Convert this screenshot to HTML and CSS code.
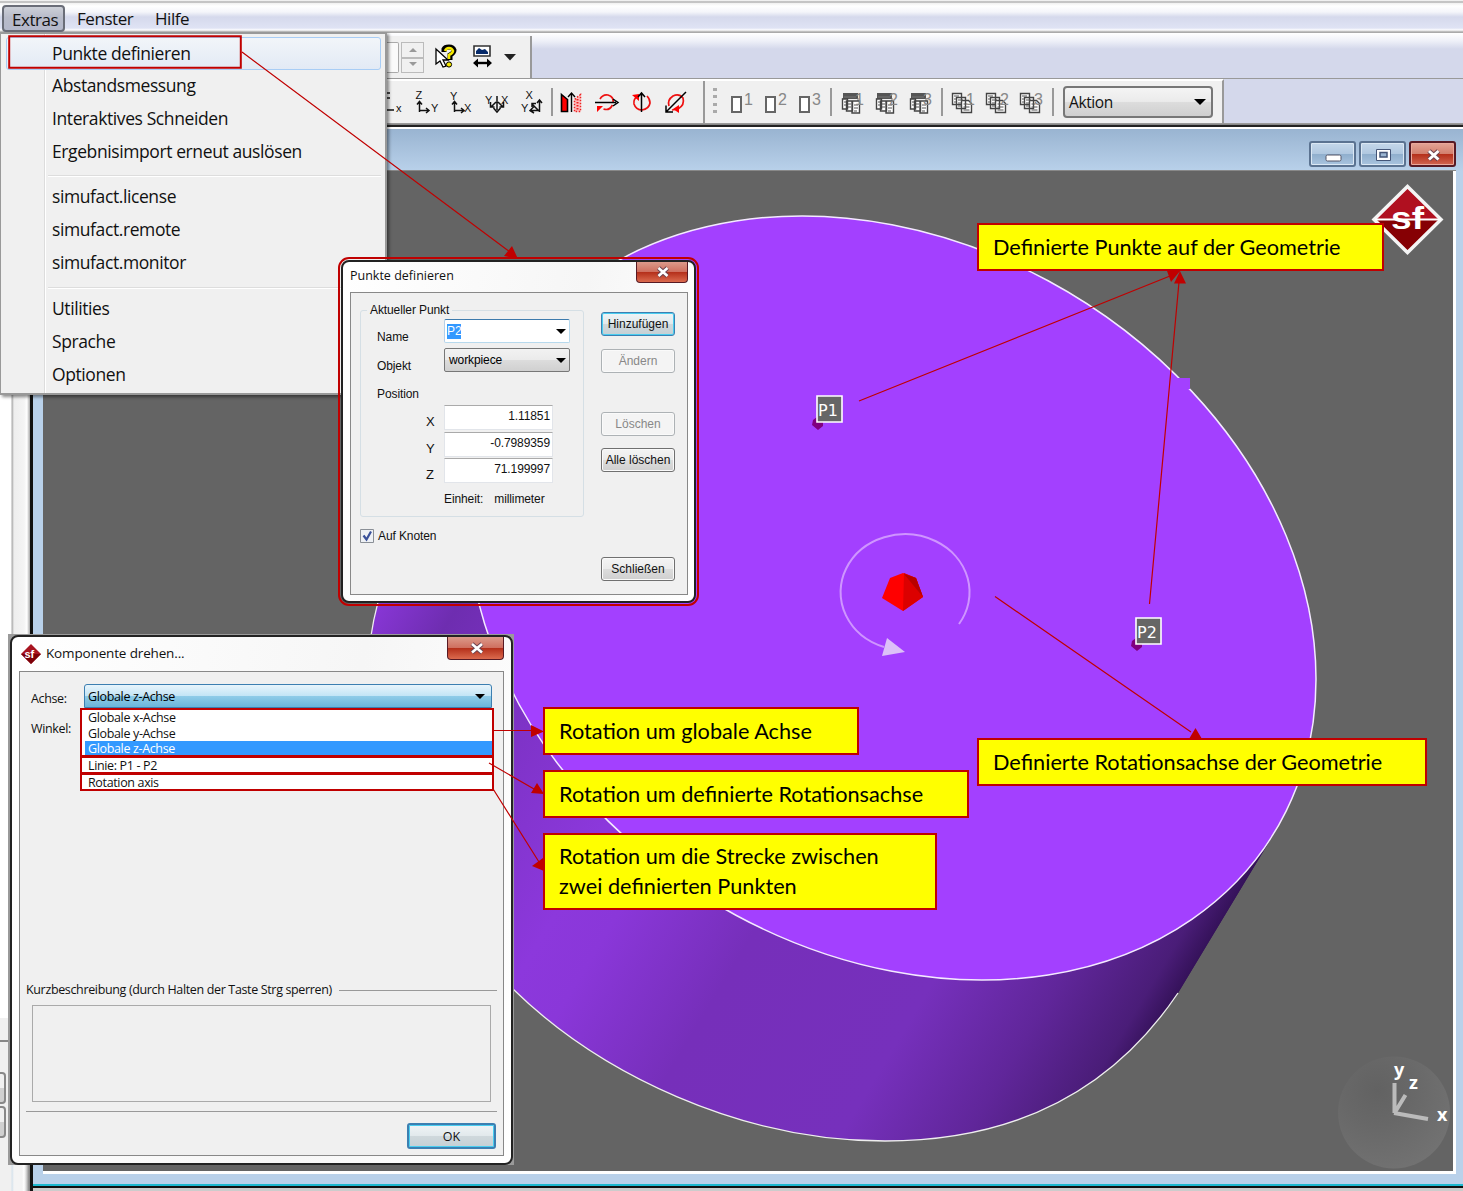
FILE: index.html
```html
<!DOCTYPE html>
<html lang="de">
<head>
<meta charset="utf-8">
<title>simufact</title>
<link rel="stylesheet" href="styles.css">
</head>
<body>
<div class="app">
  <nav class="menubar"><span class="menu-open">Extras</span><span class="m-fenster">Fenster</span><span class="m-hilfe">Hilfe</span></nav>
  <div class="bar bar1">
    <div class="bar-body">
      <div class="field-end"></div>
      <div class="spin"><i class="tri up"></i><i class="tri down"></i></div>
      <svg class="ico-help" width="26" height="30" viewBox="434 42 26 30">
        <path d="M436 49v15l4-3 3 6 3-1-3-6h5z" fill="#fff" stroke="#000" stroke-width="1.3"/>
        <path d="M444 52v-3q1-2 5-2t5 3q0 3-4 5v5" fill="none" stroke="#000" stroke-width="5"/>
        <path d="M445 51q1-3 4-3t4 3q0 2-4 4v4" fill="none" stroke="#f5e800" stroke-width="2.6"/>
        <circle cx="449" cy="64.5" r="2.6" fill="#f5e800" stroke="#000"/>
      </svg>
      <svg class="ico-mon" width="24" height="30" viewBox="471 42 24 30">
        <path d="M474 46h16v10h-16z" fill="#fff" stroke="#333" stroke-width="1.6"/>
        <path d="M476 54v-3l3-3 3 2 3-1 3 3v2z" fill="#062a6a"/>
        <path d="M477 63h10" stroke="#000" stroke-width="2.4"/><path d="M473 63l5-4.500v9zM492 63l-5-4.500v9z"/>
      </svg>
      <svg width="14" height="30" viewBox="503 42 14 30"><path d="M504 54h12l-6 6.500z" fill="#222"/></svg>
    </div>
  </div>
  <div class="bar bar2">
    <div class="bar-body">
      <svg width="164" height="32" viewBox="387 86 164 32" class="axes">
        <g fill="none" stroke="#111" stroke-width="1.5">
          <path d="M386 93h4M386 98h4M387 110h7M419.500 112v-9M417 104.500l2.500-3 2.500 3M419 110.500h9M426 108l3 2.500-3 2.500M454.500 112v-9M452 104.500l2.500-3 2.500 3M454 110.500h9M461 108l3 2.500-3 2.500"/>
          <path d="M497 96v14M493.500 108l3.500 4 3.500-4M490.500 102v5h4M491 107l5-5M503.500 102v5h-4M503 107l-5-5M539.500 112v-10M537 103l2.500-3 2.500 3M539 110.500h-8M534 106.500l-4 4 4 2.500M539 111l-7-7M532 107v-3.500h4"/>
        </g>
        <g class="axl"><text x="396" y="112">x</text><text x="415.500" y="99">Z</text><text x="431" y="112">Y</text><text x="450" y="100">Y</text><text x="464" y="112">X</text><text x="485" y="104">Y</text><text x="501" y="104">X</text><text x="525.500" y="99">X</text><text x="521" y="112">Y</text></g>
      </svg>
      <i class="sep"></i>
      <svg width="150" height="32" viewBox="555 86 150 32" fill="none">
        <path d="M563.500 94.500l6 5v12h-6z" fill="#f00" stroke="#000" stroke-width="1.600"/>
        <path d="M573.500 112V94M570 97l3.500-4 3.500 4" stroke="#000" stroke-width="1.400"/>
        <path d="M582.500 94.500l-6 5v12h6z" fill="#fbb" stroke="#e22" stroke-width="1.500" stroke-dasharray="1.500 1.500"/><path d="M579.500 99v12" stroke="#e22" stroke-width="2" stroke-dasharray="1.500 1.500"/>
        <g stroke="#e11" stroke-width="1.700"><path d="M602 99q3-5 8-4 6 2 5 7M614.500 105q-3 6-9 4"/><path d="M640 96q-5 3-4 8 2 6 8 6 7-1 8-7 0-4-3-7"/><path d="M671 106q-2-6 4-10 6-3 10 2 2 7-5 11l-6 1"/></g>
        <path d="M599 112v-6h6zM634 95l7-1v7zM681 105v8l-6-4z" fill="#f00"/>
        <path d="M597 102.500h21M615 99l5 3.500-5 3.500M643.500 112V94M640 97l3.500-4 3.500 4M688 92l-20 20M668 105.500v6.500h7" stroke="#000" stroke-width="1.500"/>
      </svg>
      <i class="sep tall"></i>
      <i class="grip"></i>
      <svg class="nums" width="108" height="32" viewBox="724 86 108 32">
        <g fill="#fff" stroke="#666" stroke-width="2"><path d="M734 97h9v15h-9zM768 97h9v15h-9zM802 97h9v15h-9z"/></g>
        <text x="746" y="105">1</text><text x="780" y="105">2</text><text x="814" y="105">3</text>
      </svg>
      <i class="sep"></i>
      <svg class="nums" width="109" height="32" viewBox="834 86 109 32">
        <defs>
          <g id="tab"><path d="M2 7h15v6h-15z" fill="#555"/><path d="M2 12v8h8M3 11h12M17 12v3" fill="none" stroke="#777"/><path d="M1.500 13h5v10h-5zM5.500 15h6v10h-6zM11 15h7.500v12h-7.500z" fill="#fff" stroke="#444" stroke-width="1.400"/><path d="M13 19h4M13 22h4M13 25h3M7 18h3M7 21h3M3 16h2M3 19h2" stroke="#555"/></g>
          <g id="pages"><path d="M1.500 7.500h9v11h-9zM5.500 11.500h9v11h-9zM10.500 14.500h7l3 3v9h-10z" fill="#fff" stroke="#444" stroke-width="1.400"/><path d="M3 10h5M3 13h2M3 16h2M7 14h5M7 17h3M7 20h3M12.500 18h4M12.500 21h6M12.500 24h6" stroke="#555"/></g>
        </defs>
        <use href="#tab" x="843" y="86"/><use href="#tab" x="877" y="86"/><use href="#tab" x="911" y="86"/>
        <text x="857" y="105">1</text><text x="891" y="105">2</text><text x="925" y="105">3</text>
      </svg>
      <i class="sep"></i>
      <svg class="nums" width="109" height="32" viewBox="945 86 109 32">
        <use href="#pages" x="953" y="86"/><use href="#pages" x="987" y="86"/><use href="#pages" x="1021" y="86"/>
        <text x="968" y="105">1</text><text x="1002" y="105">2</text><text x="1036" y="105">3</text>
      </svg>
      <i class="sep"></i>
      <div class="aktion"><span>Aktion</span><i class="tri down big"></i></div>
    </div>
  </div>
  <div class="workspace">
    <div class="side"><div class="side-low"><i></i><b></b><b></b></div></div>
    <div class="mdi">
      <div class="mdi-title">
        <span class="wb"><svg width="44" height="24"><rect x="15" y="12" width="15" height="6" rx="1.500" fill="#fff" stroke="#556"/></svg></span>
        <span class="wb"><svg width="44" height="24"><path d="M15.500 6.500h14v11h-14z" fill="#fff" stroke="#445577"/><path d="M19 9.500h7v4.500h-7z" fill="#9bb6d2" stroke="#445577" stroke-width="1.500"/></svg></span>
        <span class="wb red"><svg width="44" height="24"><path d="M18 8l9.500 8.500M27.500 8l-9.500 8.500" stroke="#6b4350" stroke-width="5"/><path d="M18 8l9.500 8.500M27.500 8l-9.500 8.500" stroke="#fff" stroke-width="3"/></svg></span>
      </div>
      <div class="viewport">
        <svg width="1411" height="1001" viewBox="43 172 1411 1001">
          <defs>
            <linearGradient id="side" gradientUnits="userSpaceOnUse" x1="509" y1="365" x2="1278" y2="828">
              <stop offset="0" stop-color="#8c38dc"/><stop offset=".09" stop-color="#6e2db0"/><stop offset=".2" stop-color="#7c32c4"/><stop offset=".36" stop-color="#8c38dc"/><stop offset=".42" stop-color="#8a37d9"/><stop offset=".56" stop-color="#762fba"/><stop offset=".76" stop-color="#7630bc"/><stop offset=".88" stop-color="#60269a"/><stop offset=".97" stop-color="#4a1d78"/><stop offset="1" stop-color="#35125a"/>
            </linearGradient>
            <radialGradient id="ball" cx=".35" cy=".3" r=".8"><stop offset="0" stop-color="#626262"/><stop offset=".4" stop-color="#686868"/><stop offset="1" stop-color="#737373"/></radialGradient>
          </defs>
          <g fill="url(#side)">
            <path d="M509 365L412 526L1178 994L1275 833z"/>
            <path d="M371 679A424 424 0 0 0 371 679"/>
          </g>
          <path d="M412 526C360 610 358 700 385 785C410 870 455 940 513 990C600 1075 740 1142 885 1142C1010 1142 1110 1095 1178 994L1275 833L509 365z" fill="url(#side)"/>
          <path d="M412 526C360 610 358 700 385 785C410 870 455 940 513 990C600 1075 740 1142 885 1142C1010 1142 1110 1095 1178 994" fill="none" stroke="#eee" stroke-width="1.300"/>
          <circle r="1" transform="matrix(424 81.100 0 373.300 892 599)" fill="#a340ff" stroke="#f4eaff" stroke-width="1.500" vector-effect="non-scaling-stroke"/>
          <path d="M1177 379h13v11h-13z" fill="#a340ff"/>
          <g fill="none" stroke="#cf95ff" stroke-width="2"><path d="M959 625A64.500 58 0 1 0 884 648"/></g>
          <path d="M887 639l18 14-23 4z" fill="#dcc0f8"/>
          <path d="M903 574l13 5 7 19-20 14-21-13 8-20z" fill="#f00"/><path d="M904 574l12 5 7 19-20 14z" fill="#dc0000"/><path d="M904 575l12 4 7 19z" fill="#b80000"/>
          <path d="M813 421l4-3 6 3v6l-5 4-6-5zM1132 642l4-3 6 3v6l-5 4-6-5z" fill="#800080"/>
          <g fill="#666" stroke="#fff" stroke-width="1.600"><path d="M817 397h25v26h-25zM1136 619h25v26h-25z"/></g>
          <g class="pt"><text x="818" y="416.500">P1</text><text x="1137" y="638.500">P2</text></g>
          <circle cx="1394" cy="1113.500" r="56" fill="url(#ball)"/>
          <g stroke="#bbb" stroke-width="4" fill="none"><path d="M1394.500 1084v30M1394.500 1114l11-18M1394 1114l34 6"/></g>
          <g class="xyz"><text x="1394" y="1077">y</text><text x="1409" y="1090">z</text><text x="1437" y="1122">x</text></g>
          <g id="logo"><path d="M1407.500 187.500l33 33-33 33-33-33z" fill="#b01020"/><path d="M1374.500 220.500h66l-33 33z" fill="#860004"/><path d="M1407.500 187.500l33.500 33-33.500 33-33.500-33z" fill="none" stroke="#f4f4f4" stroke-width="3.500"/><path d="M1375 220.500h66" stroke="#fff" stroke-width="2"/><text x="1391" y="230" font-family="Liberation Sans" font-weight="bold" font-size="31" fill="#fff" textLength="33" lengthAdjust="spacingAndGlyphs">sf</text></g>
        </svg>
      </div>
    </div>
  </div>
</div>

<div class="dropdown">
  <div class="hot">Punkte definieren</div>
  <div>Abstandsmessung</div>
  <div>Interaktives Schneiden</div>
  <div>Ergebnisimport erneut auslösen</div>
  <hr>
  <div>simufact.license</div>
  <div>simufact.remote</div>
  <div>simufact.monitor</div>
  <hr>
  <div>Utilities</div>
  <div>Sprache</div>
  <div>Optionen</div>
</div>

<section class="dlg points">
  <header><span>Punkte definieren</span><b class="close"><svg width="50" height="20"><path d="M21.500 6l9 8M30.500 6l-9 8" stroke="#6b4350" stroke-width="4.500"/><path d="M21.500 6l9 8M30.500 6l-9 8" stroke="#fff" stroke-width="2.600"/></svg></b></header>
  <div class="pane">
    <div class="col-l">
      <fieldset>
        <legend>Aktueller Punkt</legend>
        <div class="row r-name"><label>Name</label><div class="combo edit"><mark>P2</mark><i class="tri down"></i></div></div>
        <div class="row r-obj"><label>Objekt</label><div class="combo"><span>workpiece</span><i class="tri down"></i></div></div>
        <div class="row r-pos"><label>Position</label></div>
        <div class="row xyzrow"><label>X</label><output>1.11851</output></div>
        <div class="row xyzrow"><label>Y</label><output>-0.7989359</output></div>
        <div class="row xyzrow"><label>Z</label><output>71.199997</output></div>
        <div class="row unit"><span>Einheit:</span><span>millimeter</span></div>
      </fieldset>
      <div class="check"><svg width="14" height="14"><path d="M.5.5h13v13h-13z" fill="#eef1f5" stroke="#8a8f96"/><path d="M3.500 6.500l3 4 4.500-8" fill="none" stroke="#39509a" stroke-width="2.200"/></svg><span>Auf Knoten</span></div>
    </div>
    <div class="col-r">
      <button class="btn focus">Hinzufügen</button>
      <button class="btn off b2">Ändern</button>
      <button class="btn off b3">Löschen</button>
      <button class="btn b4"><span>Alle löschen</span></button>
      <button class="btn b5">Schließen</button>
    </div>
  </div>
</section>

<section class="dlg-wrap">
<div class="dlg rotate">
  <header><svg width="20" height="20" viewBox="0 0 20 20"><path d="M10 0l10 10-10 10L0 10z" fill="#a81420"/><path d="M0 10h20L10 20z" fill="#7c0008"/><text x="3.500" y="13.500" font-family="Liberation Sans" font-weight="bold" font-size="11" fill="#fff">sf</text></svg><span>Komponente drehen...</span><b class="close"><svg width="55" height="22"><path d="M24 7l10 8.500M34 7l-10 8.500" stroke="#6b4350" stroke-width="4.500"/><path d="M24 7l10 8.500M34 7l-10 8.500" stroke="#fff" stroke-width="2.600"/></svg></b></header>
  <div class="pane">
    <div class="form">
      <div class="labels"><span>Achse:</span><span>Winkel:</span></div>
      <div class="select">
        <div class="sel-head"><span>Globale z-Achse</span><i class="tri down"></i></div>
        <div class="grp g1"><div>Globale x-Achse</div><div>Globale y-Achse</div><div class="on">Globale z-Achse</div></div>
        <div class="grp g2"><div>Linie: P1 - P2</div></div>
        <div class="grp g3"><div>Rotation axis</div></div>
      </div>
    </div>
    <div class="kurz"><span>Kurzbeschreibung (durch Halten der Taste Strg sperren)</span><i></i></div>
    <div class="memo"></div>
    <div class="foot"><button class="btn focus">OK</button></div>
  </div>
</div>
</section>

<div class="note n1">Definierte Punkte auf der Geometrie</div>
<div class="note n2">Definierte Rotationsachse der Geometrie</div>
<div class="note n3">Rotation um globale Achse</div>
<div class="note n4">Rotation um definierte Rotationsachse</div>
<div class="note n5">Rotation um die Strecke zwischen<br>zwei definierten Punkten</div>

<svg class="arrows" width="1463" height="1191" viewBox="0 0 1463 1191">
  <path d="M9.200 36.200h231.600v31.600H9.200z" fill="none" stroke="#c00000" stroke-width="2"/>
  <path d="M242 52L510 252M859 401L1170 276M1149.500 604L1179 282M995 596.500L1191 732M493 730.500H532M489 763L534 789M492.500 788L539 862" fill="none" stroke="#c00000" stroke-width="1.200"/>
  <path d="M518 259l-14-3 8-10zM1180 271l-9 11-4-11zM1180 271l6 12.500h-12zM1202 739h-13l6.500-11zM544 731.500l-13 5.500v-12zM544 794l-13-1 6-10zM544 871l-12-5 11-8z" fill="#c00000"/>
</svg>
</body>
</html>
```
FILE: styles.css
```css
* { box-sizing: border-box; }
body { margin: 0; width: 1463px; height: 1191px; overflow: hidden; position: relative; font-family: "Open Sans", "Noto Sans", sans-serif; color: #111; background: #f0f0f0; }
i { display: block; }
svg { display: block; flex: none; }
.app { height: 1191px; display: flex; flex-direction: column; }
.menubar { height: 33px; flex: none; display: flex; align-items: center; padding: 4px 0 0 2px; font-size: 17px; letter-spacing: -.45px; background: linear-gradient(#f0f0f0 0 1px, #999 2px, #f0f0f0 3px, #fff 6px, #f4f5fa 12px, #d5d9ec 17px, #dfe3f4 28px, #fdfdff 30px, #aaa 32px); }
.menu-open { height: 27px; width: 63px; line-height: 25px; padding-left: 8px; border: 2px solid #6a6d78; border-radius: 4px; background: linear-gradient(#cdd0d8, #b8bbc9 45%, #b4b8cb); white-space: nowrap; }
.m-fenster { margin-left: 12px; width: 78px; line-height: 25px; }
.m-hilfe { line-height: 25px; }
.bar { flex: none; display: flex; background: linear-gradient(#fff, #eef0f8 8px, #d4d8eb 16px); }
.bar-body { display: flex; align-items: center; background: #f0f0f0; border-right: 2px solid #999; }
.bar1 { height: 46px; padding-top: 3px; border-bottom: 1px solid #999; }
.bar1 .bar-body { width: 532px; padding-left: 386px; }
.field-end { width: 13px; height: 31px; border: 1px solid #aaa; border-left: 0; border-radius: 0 2px 2px 0; background: #fafafa; }
.spin { margin-left: 2px; width: 23px; height: 31px; border: 1px solid #bbb; display: flex; flex-direction: column; justify-content: space-around; align-items: center; background: linear-gradient(#f0f0f0 14px, #bbb 14px 16px, #f0f0f0 16px); }
.spin .tri { border-width: 4px; color: #999; }
.tri { width: 0; height: 0; border: 5px solid transparent; }
.tri.down { border-top-color: currentColor; border-bottom: 0; }
.tri.up { border-bottom-color: currentColor; border-top: 0; }
.ico-help { margin-left: 10px; }
.ico-mon { margin-left: 11px; }
.ico-mon + svg { margin-left: 8px; }
.bar2 { height: 44px; background: #d4d8eb; }
.bar2 .bar-body { width: 1224px; padding-left: 387px; border-top: 2px solid #fff; }
.sep { width: 2px; height: 28px; background: #999; flex: none; }
.sep.tall { height: 42px; }
.axl text { font: 11px "Liberation Sans", sans-serif; fill: #111; }
.nums text { font: 16px "Liberation Sans", sans-serif; fill: #888; }
.grip { width: 4px; height: 28px; margin: 0 5px 0 8px; background: repeating-linear-gradient(#aaa 0 3px, #f0f0f0 3px 7.500px); }
.aktion { margin-left: 9px; width: 150px; height: 32px; border: 2px solid #777; border-radius: 4px; display: flex; align-items: center; justify-content: space-between; padding: 0 5px 0 4px; font-size: 15.500px; letter-spacing: -.4px; background: linear-gradient(#f4f4f4, #ebebeb 48%, #dcdcdc 52%, #cfcfcf); }
.tri.big { border-width: 6px; color: #000; }
.workspace { flex: 1; display: flex; border-top: 1px solid #999; }
.side { width: 30px; flex: none; background: linear-gradient(90deg, #fff 0 11px, #aaa 12px, #eee 14px, #f4f4f4 24px, #fff 27px, #ddd 28px, #aaa 30px); display: flex; flex-direction: column; justify-content: flex-end; }
.side-low { height: 173px; background: linear-gradient(90deg, #f0f0f0 0 11px, #d5e2ec 12px, #f4f4f4 14px 22px, #fff 24px, #ddd 26px, #888 29px); padding-top: 22px; }
.side-low i { height: 2px; width: 8px; background: #888; margin-bottom: 30px; }
.side-low b { display: block; width: 6px; height: 32px; border: 2px solid #888; border-left: 0; border-radius: 0 4px 4px 0; margin-bottom: 2px; background: linear-gradient(#f0f0f0 50%, #d0d0d0 50%); }
.mdi { flex: 1; height: 1067px; display: flex; flex-direction: column; padding: 4px 9px 3px 10px; border-left: 3px solid #111; background: linear-gradient(#888 0 1px, #222 1px 3px, #fff 3px 5px, #99b4d1 5px, #b9d1ea 47px, #b9d1ea 1060px, #1cb8cf 1060px 1062px, #111 1062px 1064px, #ccc 1064px); }
.mdi-title { height: 43px; flex: none; display: flex; justify-content: flex-end; gap: 3px; padding-top: 13px; border-bottom: 1px solid #888; }
.wb { width: 47px; height: 26px; border: 2px solid #5b7391; border-radius: 3px; background: linear-gradient(#c5d8ea, #b0c8e0 48%, #90afcd 52%, #a9c4df); box-shadow: inset 0 0 0 1px #dbe8f4; }
.wb.red { border-color: #571a24; background: linear-gradient(#e3a596, #d3806e 48%, #b5301b 52%, #d16651); box-shadow: inset 0 0 0 1px #eaa89b; }
.viewport { width: 1413px; height: 1003px; background: #646464; border-right: 3px solid #fff; border-bottom: 3px solid #fff; overflow: hidden; }
.pt text { font: 16px "DejaVu Sans", sans-serif; fill: #fff; }
.xyz text { font: bold 18px "Noto Sans", sans-serif; fill: #fff; }

.dropdown { position: absolute; left: 0; top: 32px; width: 387px; height: 363px; padding: 4px 4px 0 5px; border: 2px solid #999; border-left-width: 1px; background: linear-gradient(90deg, #f0f0f0 43px, #dcdcdc 43px 44px, #fff 44px 45px, #f0f0f0 45px); font-size: 17.500px; letter-spacing: -.4px; box-shadow: 2px 2px 3px rgba(0,0,0,.45); }
.dropdown div { height: 33.100px; line-height: 30px; padding-left: 46px; white-space: nowrap; }
.dropdown .hot { height: 33px; margin-top: -1px; border: 1px solid #a8cdf5; border-radius: 3px; padding-left: 45px; background: linear-gradient(#f2f5f9, #e2eaf5); }
.dropdown hr { margin: 6px 0 4px 42px; border: 0; height: 2px; background: linear-gradient(#ddd 50%, #fff 50%); }

.dlg { display: flex; flex-direction: column; background: linear-gradient(100deg, #fff, #f6f6f6 60%, #fff); border: 2px solid #222; border-radius: 8px; }
.dlg header { display: flex; flex: none; white-space: nowrap; }
.close { margin-left: auto; border: 1px solid #571a24; border-top: 0; border-radius: 0 0 4px 4px; background: linear-gradient(#dc9a8b, #cf7060 48%, #b5301b 52%, #db6a4e); }
.pane { background: #f0f0f0; border: 1px solid #888; flex: 1; }
.btn { font: inherit; color: #111; padding: 0; border: 1px solid #707070; border-radius: 3px; display: block; white-space: nowrap; background: linear-gradient(#f4f4f4, #ebebeb 48%, #dcdcdc 52%, #cfcfcf); box-shadow: inset 0 0 0 1px #fafafa; }
.btn.focus { border: 1px solid #3c7fb1; box-shadow: inset 0 0 0 1px #49cdf0; background: linear-gradient(#eff4f6, #e2e9ec 48%, #cfd8dc 52%, #c5d0d5); }
.btn.off { border-color: #adb2b5; color: #888; background: #f4f4f4; }
.points { position: absolute; left: 341px; top: 260px; width: 355px; height: 343px; outline: 2px solid #c00000; outline-offset: 1px; padding: 0 6px 6px 7px; font: 12px "Liberation Sans", sans-serif; letter-spacing: -.1px; }
.points header { height: 30px; font: 12.500px "Open Sans", sans-serif; line-height: 28px; letter-spacing: 0; }
.points .close { height: 21px; width: 52px; }
.points .pane { display: flex; padding: 0 12px 0 9px; }
.col-l { width: 225px; }
.points fieldset { margin: 10px 0 0; padding: 0; height: 214px; border: 1px solid #d5dfe5; border-radius: 3px; }
.points legend { margin-left: 6px; padding: 0 3px; line-height: 14px; }
.row { display: flex; }
.row label { padding-left: 16px; width: 83px; flex: none; }
.combo { width: 126px; height: 24px; border: 1px solid #777; border-radius: 2px; display: flex; align-items: center; justify-content: space-between; padding: 0 3px 0 4px; color: #000; background: linear-gradient(#f2f2f2, #ebebeb 48%, #dcdcdc 52%, #d0d0d0); }
.combo.edit { background: #fff; border-color: #3d7bad #b7d9ed #b7d9ed #b5cfe7; padding-left: 2px; }
.combo mark { background: #3399ff; color: #fff; height: 15px; line-height: 15px; }
.r-name { margin-top: 2px; }
.r-name label, .r-obj label { padding-top: 11px; line-height: 14px; }
.r-obj { margin-top: 4px; height: 24px; }
.r-pos { margin-top: 13px; height: 18px; line-height: 18px; }
.xyzrow { height: 26.700px; }
.xyzrow:nth-of-type(4) { margin-top: 2px; }
.xyzrow label { padding: 9px 0 0 65px; font-size: 13px; line-height: 15px; }
.xyzrow output { width: 109px; height: 25px; border: 1px solid #e2e5ea; border-top-color: #aaa; background: #fff; text-align: right; padding: 3px 2px 0 0; line-height: 14px; }
.unit { padding: 7px 0 0 83px; gap: 11px; }
.check { display: flex; gap: 4px; margin-top: 12px; }
.col-r { margin-left: 17px; }
.col-r .btn { width: 74px; height: 24px; margin-top: 19px; }
.col-r .btn.b2 { margin-top: 13px; }
.col-r .btn.b3 { margin-top: 39px; }
.col-r .btn.b4 { margin-top: 12px; }
.col-r .btn.b5 { margin-top: 85px; }
.dlg-wrap { position: absolute; left: 8px; top: 634px; width: 506px; height: 531px; background: #9a9a9a; padding: 1px 1px 0 2px; }
.rotate { height: 530px; padding: 0 7px 7px 7px; font-size: 12.500px; letter-spacing: -.35px; }
.rotate header { height: 34px; font-size: 13.500px; line-height: 33px; letter-spacing: -.15px; }
.rotate header > svg { margin: 7px 5px 0 2px; }
.rotate .close { width: 57px; height: 23px; }
.rotate .pane { display: flex; flex-direction: column; }
.form { display: flex; height: 309px; padding-top: 12px; }
.labels { width: 60px; padding-left: 11px; display: flex; flex-direction: column; gap: 12px; line-height: 18px; padding-top: 6px; }
.select { width: 414px; }
.sel-head { margin: 0 2px 0 4px; width: 408px; height: 24px; border: 1px solid #3c7fb1; border-radius: 3px 3px 0 0; display: flex; align-items: center; justify-content: space-between; padding: 0 6px 0 3px; color: #000; background: linear-gradient(#e8f5fc, #c4e5f6 48%, #8fcbe8 52%, #6bb5da); }
.grp { border: 2px solid #c00000; background: #fff; line-height: 16px; height: 17px; overflow: hidden; }
.grp div { padding-left: 6px; height: 15.700px; }
.grp .on { background: #3399ff; color: #fff; margin: 0 0 0 3px; padding-left: 3px; }
.g1 { height: 49px; }
.g2, .g3 { border-top-width: 1px; }
.kurz { display: flex; align-items: center; padding: 0 6px; line-height: 18px; gap: 7px; white-space: nowrap; }
.kurz i { flex: 1; height: 1px; background: #999; }
.memo { margin: 6px 12px 0; height: 97px; border: 1px solid #aaa; }
.foot { margin: 9px 6px 0; border-top: 1px solid #999; padding: 11px 1px 0 0; display: flex; justify-content: flex-end; }
.foot .btn { width: 89px; height: 26px; border-width: 2px; }

.note { position: absolute; border: 2px solid #c00000; background: #ff0; color: #000; font: 21.700px/30px Lato, sans-serif; padding: 7px 14px; white-space: nowrap; height: 48px; }
.n1 { left: 977px; top: 223px; width: 407px; }
.n2 { left: 977px; top: 738px; width: 450px; }
.n3 { left: 543px; top: 707px; width: 316px; }
.n4 { left: 543px; top: 770px; width: 426px; }
.n5 { left: 543px; top: 833px; width: 394px; height: 77px; padding-top: 6px; }
.arrows { position: absolute; left: 0; top: 0; }
```
